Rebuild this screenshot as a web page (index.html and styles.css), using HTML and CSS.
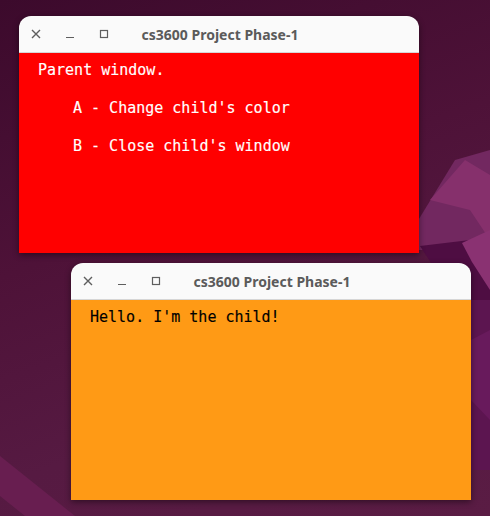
FILE: index.html
```html
<!DOCTYPE html>
<html lang="en">
<head>
    <meta charset="UTF-8">
    <title>cs3600 Project Phase-1</title>
    <link rel="stylesheet" href="styles.css">
</head>
<body>
    <div class="desktop">
        <!-- wallpaper shapes -->
        <svg class="wallpaper" width="490" height="516" viewBox="0 0 490 516">
            <polygon points="400,250 455,160 490,150 490,250" fill="#722860"/>
            <polygon points="430,200 465,160 490,175 490,240 470,210" fill="#86306c"/>
            <polygon points="420,246 470,240 490,262 490,300 455,300" fill="#4e0d42"/>
            <polygon points="462,243 490,230 490,290 472,262" fill="#8a3272"/>
            <polygon points="471,300 490,300 490,470 471,470" fill="#5c1550"/>
            <polygon points="471,340 490,330 490,420 471,400" fill="#681a5c"/>
            <polygon points="0,456 75,516 25,516 0,496" fill="#681e50"/>
        </svg>

        <div class="window parent-window">
            <div class="titlebar">
                <div class="controls">
                    <span class="ctl">
                        <svg width="10" height="10" viewBox="0 0 10 10"><path d="M1 1 L9 9 M9 1 L1 9" stroke="#5e5e5e" stroke-width="1.4"/></svg>
                    </span>
                    <span class="ctl">
                        <svg width="10" height="10" viewBox="0 0 10 10"><path d="M1 8.5 H9" stroke="#5e5e5e" stroke-width="1.2"/></svg>
                    </span>
                    <span class="ctl">
                        <svg width="10" height="10" viewBox="0 0 10 10"><rect x="1.5" y="1.5" width="7" height="7" fill="none" stroke="#5e5e5e" stroke-width="1.2"/></svg>
                    </span>
                </div>
                <div class="title">cs3600 Project Phase-1</div>
                <div></div>
            </div>
            <div class="content red">
                <div class="line">Parent window.</div>
                <div class="line indent">A - Change child's color</div>
                <div class="line indent">B - Close child's window</div>
            </div>
        </div>

        <div class="window child-window">
            <div class="titlebar">
                <div class="controls">
                    <span class="ctl">
                        <svg width="10" height="10" viewBox="0 0 10 10"><path d="M1 1 L9 9 M9 1 L1 9" stroke="#5e5e5e" stroke-width="1.4"/></svg>
                    </span>
                    <span class="ctl">
                        <svg width="10" height="10" viewBox="0 0 10 10"><path d="M1 8.5 H9" stroke="#5e5e5e" stroke-width="1.2"/></svg>
                    </span>
                    <span class="ctl">
                        <svg width="10" height="10" viewBox="0 0 10 10"><rect x="1.5" y="1.5" width="7" height="7" fill="none" stroke="#5e5e5e" stroke-width="1.2"/></svg>
                    </span>
                </div>
                <div class="title">cs3600 Project Phase-1</div>
                <div></div>
            </div>
            <div class="content orange">
                <div class="line">Hello. I'm the child!</div>
            </div>
        </div>
    </div>
</body>
</html>
```

FILE: styles.css
```css
body {
    margin: 0;
    width: 490px;
    height: 516px;
    overflow: hidden;
}

.desktop {
    position: relative;
    width: 490px;
    height: 516px;
    background: linear-gradient(160deg, #3c0a2c 0%, #4e1238 40%, #561a42 70%, #5a1c44 100%);
    overflow: hidden;
}

.wallpaper {
    position: absolute;
    left: 0;
    top: 0;
}

/* Windows sit on the desktop at fixed spots */
.window {
    position: absolute;
    width: 400px;
    border-radius: 12px 12px 0 0;
    overflow: hidden;
    box-shadow: 0 2px 6px rgba(0, 0, 0, 0.45);
}

.parent-window {
    left: 19px;
    top: 16px;
}

.child-window {
    left: 71px;
    top: 263px;
}

.titlebar {
    height: 36px;
    background: #fafafa;
    border-bottom: 1px solid #d6d6d6;
    display: grid;
    grid-template-columns: 1fr auto 1fr;
    align-items: center;
}

.controls {
    display: flex;
    align-items: center;
}

.ctl {
    width: 34px;
    height: 36px;
    display: flex;
    align-items: center;
    justify-content: center;
}

.title {
    font-family: "Noto Sans", sans-serif;
    font-weight: bold;
    font-size: 14px;
    color: #5b5b5b;
    padding-left: 2px;
}

.content {
    height: 200px;
    box-sizing: border-box;
    padding: 8px 19px;
    display: flex;
    flex-direction: column;
    gap: 20px;
    font-family: "DejaVu Sans Mono", monospace;
    font-size: 15px;
    -webkit-text-stroke: 0.15px currentColor;
}

.red {
    background: #ff0000;
    color: #ffffff;
}

.orange {
    background: #ff9a15;
    color: #000000;
}

.line {
    height: 18px;
    line-height: 18px;
    white-space: pre;
}

.indent {
    padding-left: 35px;
}
```
